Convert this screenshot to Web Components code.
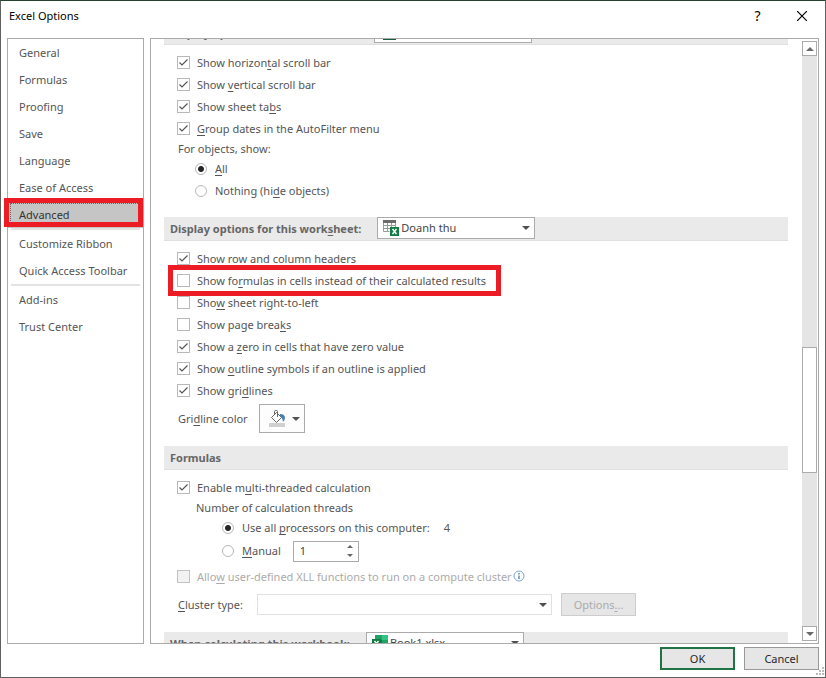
<!DOCTYPE html>
<html lang="en">
<head>
<meta charset="utf-8">
<title>Excel Options</title>
<style>
    html, body {
        margin: 0;
        height: 100%;
    }
    body {
        font-family: "Noto Sans", "Open Sans", sans-serif;
        font-size: 11px;
        line-height: 16px;
        color: #555;
        background-color: #fff;
    }
</style>
</head>
<body>
<options-dialog></options-dialog>

<script>
// Shared by every element that shows labels with access keys
const baseStyle = `
    * { box-sizing: border-box; }
    u, ::slotted(u) {
        text-underline-offset: 2px;
        text-decoration-thickness: 1px;
        text-decoration-skip-ink: none;
    }
    input, select, button {
        font: inherit;
        color: inherit;
        margin: 0;
        border-radius: 0;
    }
`;

const icons = {
    sheet: `
        <svg width="16" height="16" viewBox="0 0 16 16">
            <path d="M0 0h13v3H0z" fill="#6b6b6b"/>
            <path d="M.5 3v8.500h6M.5 5.500h12M.5 8.500h7M4.500 3v8.500M8.500 3v4M12.500 3v4" fill="none" stroke="#9a9a9a"/>
            <path d="M7 7h9v9H7z" fill="#107c41"/>
            <path d="M9.500 9l4 5M13.500 9l-4 5" stroke="#fff" stroke-width="1.500"/>
        </svg>`,
    book: `
        <svg width="16" height="16" viewBox="0 0 16 16">
            <path d="M3 0h7v5H3z" fill="#21a366"/>
            <path d="M10 0h6v5h-6z" fill="#33c481"/>
            <path d="M3 5h7v5H3z" fill="#107c41"/>
            <path d="M10 5h6v5h-6z" fill="#21a366"/>
            <path d="M3 10h13v6H3z" fill="#185c37"/>
            <path d="M0 4h9v9H0z" fill="#107c41"/>
            <path d="M2.500 6l4 5M6.500 6l-4 5" stroke="#fff" stroke-width="1.500"/>
        </svg>`,
    arrow: `<svg class="arrow" width="8" height="4" viewBox="0 0 8 4"><path d="M0 0h8L4 4z" fill="#505050"/></svg>`,
};

class OptionCheck extends HTMLElement {
    constructor() {
        super();
        this.attachShadow({ mode: 'open' });
        this.shadowRoot.innerHTML = `
            <style>
                ${baseStyle}
                :host {
                    display: flex;
                    height: 22px;
                    padding-left: 13px;
                    line-height: 14px;
                }
                label {
                    position: relative;
                    display: flex;
                    align-items: flex-start;
                    gap: 7px;
                    padding-top: 4px;
                }
                .box {
                    display: grid;
                    width: 13px;
                    height: 13px;
                }
                .box > * { grid-area: 1 / 1; }
                input {
                    appearance: none;
                    width: 13px;
                    height: 13px;
                    border: 1px solid #b8b8b8;
                    background-color: #fff;
                }
                svg { visibility: hidden; pointer-events: none; }
                input:checked + svg { visibility: visible; }
                input:disabled { background-color: #f2f2f2; border-color: #c3c3c3; }
                :host([disabled]) { color: #ababab; }
                /* Red frame that calls out one option */
                :host([marked]) label::after {
                    content: "";
                    position: absolute;
                    inset: -5px -15px -4px -9px;
                    border: 5px solid #ed1c24;
                    z-index: 1;
                    pointer-events: none;
                }
            </style>
            <label>
                <span class="box">
                    <input type="checkbox">
                    <svg width="13" height="13" viewBox="0 0 13 13"><path d="M2.500 6.500l2.500 2.500 5.500-5.500" fill="none" stroke="#555" stroke-width="1.200"/></svg>
                </span>
                <span><slot></slot></span>
            </label>
        `;
        const input = this.shadowRoot.querySelector('input');
        input.checked = this.hasAttribute('checked');
        input.disabled = this.hasAttribute('disabled');
    }
}

class OptionRadio extends HTMLElement {
    constructor() {
        super();
        this.attachShadow({ mode: 'open' });
        this.shadowRoot.innerHTML = `
            <style>
                ${baseStyle}
                :host {
                    display: flex;
                    align-items: center;
                    min-height: 22px;
                    padding-left: 31px;
                }
                :host([nested]) { padding-left: 58px; }
                label {
                    display: flex;
                    align-items: center;
                    gap: 8px;
                }
                input {
                    appearance: none;
                    width: 12px;
                    height: 12px;
                    border: 1px solid #b8b8b8;
                    border-radius: 50%;
                    background-color: #fff;
                }
                input:checked {
                    background-image: radial-gradient(circle, #262626 2.500px, transparent 3.500px);
                }
            </style>
            <label><input type="radio"><span><slot></slot></span></label>
            <slot name="after"></slot>
        `;
        this.input = this.shadowRoot.querySelector('input');
        this.input.checked = this.hasAttribute('checked');
        this.input.addEventListener('change', () => {
            // Radios live in separate shadow roots, so the group is kept by hand
            const group = this.getAttribute('group');
            this.parentNode.querySelectorAll(`option-radio[group="${group}"]`).forEach((radio) => {
                radio.input.checked = radio === this;
            });
        });
    }
}

class SectionBar extends HTMLElement {
    constructor() {
        super();
        this.attachShadow({ mode: 'open' });
        const value = this.getAttribute('value');
        this.shadowRoot.innerHTML = `
            <style>
                ${baseStyle}
                :host {
                    display: flex;
                    height: 24px;
                    padding-left: 6px;
                    gap: 16px;
                    margin-bottom: 7px;
                    background-color: #eaeaea;
                    border-bottom: 1px solid #e0e0e0;
                }
                label, h2 {
                    margin: 0;
                    font-size: 11px;
                    line-height: 24px;
                    font-weight: bold;
                    color: #666;
                }
                .picker {
                    display: grid;
                    grid-template-columns: 24px 1fr 16px;
                    align-items: center;
                    width: 158px;
                    height: 22px;
                    background-color: #fff;
                    border: 1px solid #ababab;
                }
                svg { grid-row: 1; pointer-events: none; z-index: 1; }
                svg:first-child { grid-column: 1; margin-left: 5px; }
                .arrow { grid-column: 3; margin-left: 4px; }
                select {
                    grid-area: 1 / 1 / 2 / 4;
                    appearance: none;
                    height: 20px;
                    padding: 0 16px 0 23px;
                    border: none;
                    background: none;
                    color: #444;
                }
            </style>
            ${value ? `
                <label for="scope"><slot></slot></label>
                <span class="picker">
                    ${icons[this.getAttribute('icon')]}
                    <select id="scope"><option>${value}</option></select>
                    ${icons.arrow}
                </span>
            ` : '<h2><slot></slot></h2>'}
        `;
    }
}

class GridlineColor extends HTMLElement {
    constructor() {
        super();
        this.attachShadow({ mode: 'open' });
        this.shadowRoot.innerHTML = `
            <style>
                ${baseStyle}
                :host {
                    display: flex;
                    align-items: center;
                    gap: 11px;
                    padding: 2px 0 0 14px;
                    margin-bottom: 13px;
                }
                button {
                    display: flex;
                    align-items: center;
                    gap: 7px;
                    width: 46px;
                    height: 29px;
                    padding: 0 0 0 9px;
                    background-color: #fdfdfd;
                    border: 1px solid #ababab;
                }
            </style>
            <label for="color">Gri<u>d</u>line color</label>
            <button id="color" type="button">
                <svg width="16" height="17" viewBox="0 0 16 17">
                    <path d="M0 13h16v4H0z" fill="#d0d0d0"/>
                    <path d="M2.500 7.500l5-5 5 5-5 5z" fill="#fff" stroke="#666"/>
                    <path d="M5.500 5V1.500q0-1 1-1h1q1 0 1 1V7" fill="none" stroke="#666"/>
                    <path d="M11 4q5 0 5 4 0 2-2 4-.5-4-3-6z" fill="#4a7ead"/>
                </svg>
                ${icons.arrow}
            </button>
        `;
    }
}

class ThreadSpinner extends HTMLElement {
    constructor() {
        super();
        this.attachShadow({ mode: 'open' });
        this.shadowRoot.innerHTML = `
            <style>
                ${baseStyle}
                :host {
                    display: flex;
                    width: 66px;
                    height: 21px;
                    margin-left: 12px;
                    border: 1px solid #ababab;
                }
                input {
                    appearance: textfield;
                    flex: 1;
                    min-width: 0;
                    padding: 0 0 0 6px;
                    border: none;
                    background: none;
                    color: #444;
                }
                input::-webkit-inner-spin-button { appearance: none; }
                .steps {
                    display: flex;
                    flex-direction: column;
                    width: 16px;
                }
                button {
                    display: grid;
                    place-items: center;
                    flex: 1;
                    padding: 0;
                    border: none;
                    background: none;
                }
            </style>
            <input type="number" value="1" min="1" aria-label="Manual thread count">
            <span class="steps">
                <button type="button" aria-label="More"><svg width="6" height="3" viewBox="0 0 6 3"><path d="M0 3h6L3 0z" fill="#666"/></svg></button>
                <button type="button" aria-label="Fewer"><svg width="6" height="3" viewBox="0 0 6 3"><path d="M0 0h6L3 3z" fill="#666"/></svg></button>
            </span>
        `;
        const input = this.shadowRoot.querySelector('input');
        const [more, fewer] = this.shadowRoot.querySelectorAll('button');
        more.addEventListener('click', () => input.stepUp());
        fewer.addEventListener('click', () => input.stepDown());
    }
}

class ClusterRow extends HTMLElement {
    constructor() {
        super();
        this.attachShadow({ mode: 'open' });
        this.shadowRoot.innerHTML = `
            <style>
                ${baseStyle}
                :host {
                    display: flex;
                    align-items: center;
                    padding-left: 14px;
                    margin: 5px 0 16px;
                }
                label { width: 79px; }
                .picker {
                    display: grid;
                    grid-template-columns: 1fr 12px;
                    align-items: center;
                    width: 295px;
                    height: 21px;
                    border: 1px solid #e1e1e1;
                }
                select {
                    grid-area: 1 / 1 / 2 / 3;
                    appearance: none;
                    height: 19px;
                    border: none;
                    background: none;
                }
                .arrow { grid-area: 1 / 2; pointer-events: none; }
                button {
                    width: 75px;
                    height: 23px;
                    margin-left: 9px;
                    padding: 0;
                    color: #ababab;
                    background-color: #e6e6e6;
                    border: 1px solid #cdcdcd;
                }
            </style>
            <label for="cluster"><u>C</u>luster type:</label>
            <span class="picker"><select id="cluster"></select>${icons.arrow}</span>
            <button type="button" disabled>Options<u>.</u>..</button>
        `;
    }
}

class CategoryList extends HTMLElement {
    constructor() {
        super();
        this.attachShadow({ mode: 'open' });
        const groups = [
            ['General', 'Formulas', 'Proofing', 'Save', 'Language', 'Ease of Access', 'Advanced'],
            ['Customize Ribbon', 'Quick Access Toolbar'],
            ['Add-ins', 'Trust Center'],
        ];
        const selected = 'Advanced';
        this.shadowRoot.innerHTML = `
            <style>
                ${baseStyle}
                :host {
                    display: block;
                    border: 1px solid #ababab;
                }
                ul {
                    list-style: none;
                    margin: 0;
                    padding: 0;
                }
                ul + ul::before {
                    content: "";
                    display: block;
                    height: 2px;
                    margin: 0 3px;
                    background-color: #e3e3e3;
                }
                li { position: relative; }
                a {
                    display: block;
                    padding-left: 11px;
                    line-height: 27px;
                    color: inherit;
                    text-decoration: none;
                    white-space: nowrap;
                }
                .selected {
                    color: #333;
                    background-color: #c5c5c5;
                }
                .selected::before {
                    content: "";
                    position: absolute;
                    inset: 2px 3px 3px 2px;
                    border: 1px dotted #666;
                }
                .selected::after {
                    content: "";
                    position: absolute;
                    inset: -3px 0 1px -4px;
                    border: 5px solid #ed1c24;
                }
            </style>
            <nav>
                ${groups.map((items) => `
                    <ul>${items.map((item) => `
                        <li class="${item === selected ? 'selected' : ''}"><a href="#">${item}</a></li>`).join('')}
                    </ul>`).join('')}
            </nav>
        `;
    }
}

class ScrollRail extends HTMLElement {
    constructor() {
        super();
        this.attachShadow({ mode: 'open' });
        this.shadowRoot.innerHTML = `
            <style>
                ${baseStyle}
                :host {
                    display: flex;
                    flex-direction: column;
                    width: 15px;
                    margin: 2px 0;
                    background-color: #e5e5e5;
                }
                button {
                    display: grid;
                    place-items: center;
                    height: 15px;
                    padding: 0;
                    background-color: #fff;
                    border: 1px solid #ababab;
                }
                .track {
                    flex: 1;
                    display: grid;
                    grid-template-rows: 291fr 126fr 153fr;
                }
                .thumb {
                    grid-row: 2;
                    background-color: #fff;
                    border: 1px solid #ababab;
                }
            </style>
            <button type="button" aria-label="Scroll up"><svg width="8" height="4" viewBox="0 0 8 4"><path d="M0 4h8L4 0z" fill="#6a6a6a"/></svg></button>
            <div class="track"><div class="thumb"></div></div>
            <button type="button" aria-label="Scroll down"><svg width="8" height="4" viewBox="0 0 8 4"><path d="M0 0h8L4 4z" fill="#6a6a6a"/></svg></button>
        `;
    }
}

class AdvancedPage extends HTMLElement {
    constructor() {
        super();
        this.attachShadow({ mode: 'open' });
        this.shadowRoot.innerHTML = `
            <style>
                ${baseStyle}
                :host {
                    display: flex;
                    gap: 14px;
                    padding: 0 1px 0 13px;
                    border: 1px solid #ababab;
                    overflow: hidden;
                }
                .view {
                    flex: 1;
                    overflow: hidden;
                }
                p {
                    margin: 0 0 0 14px;
                    line-height: 18px;
                }
                .threads { margin-left: 32px; }
                .gap { margin-bottom: 15px; }
                .count { margin-left: 14px; }
                .manual { min-height: 24px; }
                .xll { margin-top: 3px; }
                .xll svg { vertical-align: -1px; margin-left: 1px; }
            </style>
            <div class="view">
                <section-bar icon="book" value="Book1.xlsx">Display options for this workbook:</section-bar>
                <option-check checked>Show horizon<u>t</u>al scroll bar</option-check>
                <option-check checked>Show <u>v</u>ertical scroll bar</option-check>
                <option-check checked>Show sheet ta<u>b</u>s</option-check>
                <option-check checked><u>G</u>roup dates in the AutoFilter menu</option-check>
                <p>For objects, show:</p>
                <option-radio group="objects" checked><u>A</u>ll</option-radio>
                <option-radio group="objects" class="gap">Nothing (hi<u>d</u>e objects)</option-radio>

                <section-bar icon="sheet" value="Doanh thu">Display options for this work<u>s</u>heet:</section-bar>
                <option-check checked>Show row and column <u>h</u>eaders</option-check>
                <option-check marked>Show fo<u>r</u>mulas in cells instead of their calculated results</option-check>
                <option-check>Sho<u>w</u> sheet right-to-left</option-check>
                <option-check>Show page brea<u>k</u>s</option-check>
                <option-check checked>Show a <u>z</u>ero in cells that have zero value</option-check>
                <option-check checked>Show <u>o</u>utline symbols if an outline is applied</option-check>
                <option-check checked>Show gri<u>d</u>lines</option-check>
                <gridline-color></gridline-color>

                <section-bar>Formulas</section-bar>
                <option-check checked>Enable m<u>u</u>lti-threaded calculation</option-check>
                <p class="threads">Number of calculation threads</p>
                <option-radio group="threads" nested checked>Use all <u>p</u>rocessors on this computer:<span class="count" slot="after">4</span></option-radio>
                <option-radio group="threads" nested class="manual"><u>M</u>anual<thread-spinner slot="after"></thread-spinner></option-radio>
                <option-check disabled class="xll">Allo<u>w</u> user-defined XLL functions to run on a compute cluster<svg width="12" height="12" viewBox="0 0 12 12"><circle cx="6" cy="6" r="5" fill="#fff" stroke="#7ba7dc"/><path d="M6 3v1.500M6 5.500V9" stroke="#3f6fa8" stroke-width="1.200"/></svg></option-check>
                <cluster-row></cluster-row>

                <section-bar icon="book" value="Book1.xlsx">When calculating t<u>h</u>is workbook:</section-bar>
            </div>
            <scroll-rail></scroll-rail>
        `;
    }

    connectedCallback() {
        // The page opens part of the way down
        this.shadowRoot.querySelector('.view').scrollTop = 18;
    }
}

class OptionsDialog extends HTMLElement {
    constructor() {
        super();
        this.attachShadow({ mode: 'open' });
        this.shadowRoot.innerHTML = `
            <style>
                ${baseStyle}
                :host {
                    box-sizing: border-box;
                    display: flex;
                    flex-direction: column;
                    height: 100vh;
                    border: 1px solid #606060;
                    border-top-color: #21432f;
                }
                header {
                    display: flex;
                    align-items: center;
                    height: 37px;
                    padding: 0 18px 8px 8px;
                    color: #000;
                }
                h1 {
                    flex: 1;
                    margin: 0;
                    font-size: 11px;
                    font-weight: normal;
                }
                header button {
                    display: grid;
                    place-items: center;
                    width: 45px;
                    padding: 0;
                    border: none;
                    background: none;
                }
                header button:last-child { width: 10px; margin-left: 17px; }
                .help { font-size: 14px; }
                main {
                    flex: 1;
                    min-height: 0;
                    display: flex;
                    gap: 6px;
                    padding: 0 6px;
                }
                category-list { flex: 0 0 137px; }
                advanced-page { flex: 1; }
                footer {
                    position: relative;
                    display: flex;
                    justify-content: flex-end;
                    gap: 9px;
                    padding: 3px 6px 7px;
                }
                footer button {
                    width: 75px;
                    height: 23px;
                    padding: 0;
                    color: #262626;
                    background-color: #e6e6e6;
                    border: 1px solid #999;
                }
                footer .ok { border: 2px solid #217346; }
                .grip {
                    position: absolute;
                    right: 1px;
                    bottom: 2px;
                }
            </style>
            <header>
                <h1>Excel Options</h1>
                <button class="help" type="button">?</button>
                <button type="button" aria-label="Close"><svg width="10" height="10" viewBox="0 0 10 10"><path d="M0 0l10 10M10 0L0 10" stroke="#000" stroke-width="1.200"/></svg></button>
            </header>
            <main>
                <category-list></category-list>
                <advanced-page></advanced-page>
            </main>
            <footer>
                <button class="ok" type="button">OK</button>
                <button type="button">Cancel</button>
                <svg class="grip" width="8" height="8" viewBox="0 0 8 8"><path d="M6 0h2v2H6zM3 3h2v2H3zM6 3h2v2H6zM0 6h2v2H0zM3 6h2v2H3zM6 6h2v2H6z" fill="#bbb"/></svg>
            </footer>
        `;
    }
}

customElements.define('option-check', OptionCheck);
customElements.define('option-radio', OptionRadio);
customElements.define('section-bar', SectionBar);
customElements.define('gridline-color', GridlineColor);
customElements.define('thread-spinner', ThreadSpinner);
customElements.define('cluster-row', ClusterRow);
customElements.define('category-list', CategoryList);
customElements.define('scroll-rail', ScrollRail);
customElements.define('advanced-page', AdvancedPage);
customElements.define('options-dialog', OptionsDialog);
</script>
</body>
</html>
